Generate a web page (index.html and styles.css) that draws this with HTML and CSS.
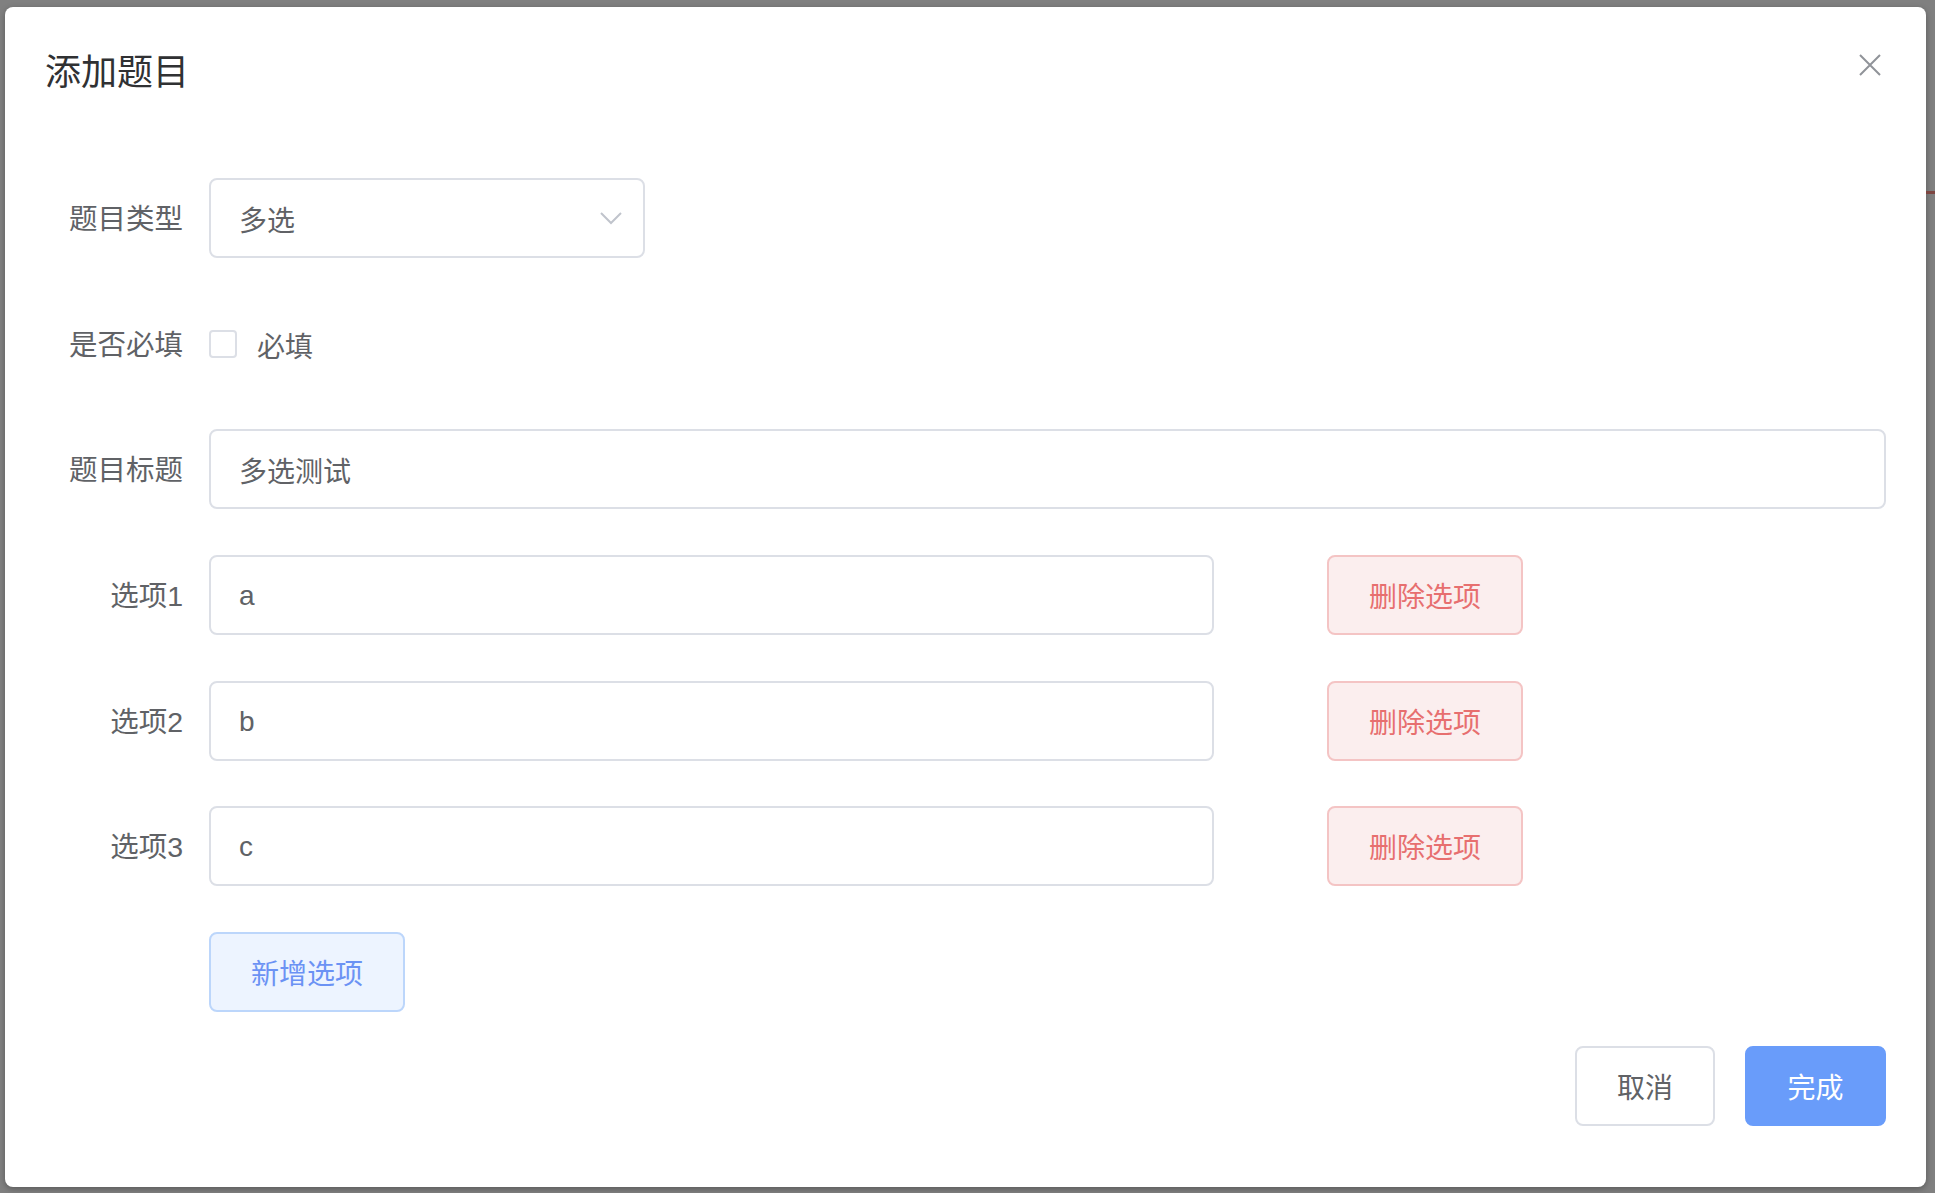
FILE: index.html
```html
<!DOCTYPE html>
<html lang="zh-CN">
<head>
<meta charset="utf-8">
<title>添加题目</title>
<link rel="stylesheet" href="styles.css">
</head>
<body>
<div class="edge-mark"></div>
<div class="dialog">
  <div class="dialog-header">
    <span class="dialog-title">添加题目</span>
    <button class="dialog-close" aria-label="关闭">
      <svg width="32" height="32" viewBox="0 0 32 32"><path d="M6 6 L26 26 M26 6 L6 26" stroke="#909399" stroke-width="2" fill="none"/></svg>
    </button>
  </div>
  <div class="dialog-body">
    <div class="form-item">
      <label class="form-label">题目类型</label>
      <div class="form-content">
        <div class="input select">
          <span class="input-text">多选</span>
          <svg class="select-arrow" width="24" height="14" viewBox="0 0 24 14"><polyline points="2,2 12,12 22,2" stroke="#c0c4cc" stroke-width="2" fill="none"/></svg>
        </div>
      </div>
    </div>
    <div class="form-item">
      <label class="form-label">是否必填</label>
      <div class="form-content">
        <span class="checkbox"></span>
        <span class="checkbox-label">必填</span>
      </div>
    </div>
    <div class="form-item">
      <label class="form-label">题目标题</label>
      <div class="form-content">
        <div class="input full"><span class="input-text">多选测试</span></div>
      </div>
    </div>
    <div class="form-item">
      <label class="form-label">选项1</label>
      <div class="form-content">
        <div class="input option"><span class="input-text">a</span></div>
        <button class="btn btn-danger">删除选项</button>
      </div>
    </div>
    <div class="form-item">
      <label class="form-label">选项2</label>
      <div class="form-content">
        <div class="input option"><span class="input-text">b</span></div>
        <button class="btn btn-danger">删除选项</button>
      </div>
    </div>
    <div class="form-item">
      <label class="form-label">选项3</label>
      <div class="form-content">
        <div class="input option"><span class="input-text">c</span></div>
        <button class="btn btn-danger">删除选项</button>
      </div>
    </div>
    <div class="form-item last">
      <label class="form-label"></label>
      <div class="form-content">
        <button class="btn btn-primary-plain">新增选项</button>
      </div>
    </div>
  </div>
  <div class="dialog-footer">
    <button class="btn btn-default">取消</button>
    <button class="btn btn-primary">完成</button>
  </div>
</div>
</body>
</html>
```
FILE: styles.css
```css
html, body {
  margin: 0;
  padding: 0;
}
body {
  width: 1935px;
  height: 1193px;
  overflow: hidden;
  background: #808080;
  font-family: "Liberation Sans", "Noto Sans CJK SC", sans-serif;
  position: relative;
}
.edge-mark {
  position: absolute;
  left: 1926px;
  top: 191px;
  width: 9px;
  height: 3px;
  background: #7d4641;
}
.dialog {
  margin: 7px 0 0 5px;
  width: 1921px;
  height: 1180px;
  background: #fff;
  border-radius: 8px;
  box-shadow: 0 2px 6px rgba(0, 0, 0, 0.3);
  display: flex;
  flex-direction: column;
  box-sizing: border-box;
}
.dialog-header {
  position: relative;
  padding: 42px 40px 0;
}
.dialog-title {
  display: block;
  font-size: 36px;
  line-height: 48px;
  color: #303133;
}
.dialog-close {
  position: absolute;
  top: 42px;
  right: 40px;
  width: 32px;
  height: 32px;
  padding: 0;
  border: none;
  background: transparent;
  display: flex;
}
.dialog-body {
  padding: 81px 40px 0;
  display: flex;
  flex-direction: column;
  gap: 45.67px;
}
.form-item {
  display: flex;
  height: 80px;
}
.form-label {
  width: 164px;
  flex: 0 0 164px;
  box-sizing: border-box;
  padding: 1px 26px 0 0;
  text-align: right;
  font-size: 28.5px;
  line-height: 80px;
  color: #606266;
}
.form-content {
  flex: 1;
  display: flex;
  align-items: center;
}
.input {
  height: 80px;
  box-sizing: border-box;
  border: 2px solid #dcdfe6;
  border-radius: 8px;
  padding: 2px 30px 0 28px;
  display: flex;
  align-items: center;
  font-size: 28px;
  color: #606266;
  background: #fff;
}
.select {
  width: 436px;
  justify-content: space-between;
  padding-right: 20px;
}
.select-arrow {
  margin-top: -2px;
}
.full {
  flex: 1;
}
.option {
  width: 1005px;
  flex: 0 0 1005px;
}
.checkbox {
  width: 28px;
  height: 28px;
  box-sizing: border-box;
  border: 2px solid #dcdfe6;
  border-radius: 4px;
  background: #fff;
}
.checkbox-label {
  margin-left: 20px;
  padding-top: 2px;
  font-size: 28px;
  color: #606266;
}
.btn {
  height: 80px;
  box-sizing: border-box;
  border: 2px solid #dcdfe6;
  border-radius: 8px;
  padding: 6px 0 0;
  font-family: "Liberation Sans", "Noto Sans CJK SC", sans-serif;
  font-size: 28px;
  line-height: 1;
  background: #fff;
  color: #606266;
  cursor: pointer;
}
.btn-danger {
  margin-left: 113px;
  width: 196px;
  background: #fbeeee;
  border-color: #f4c4c4;
  color: #e76f6f;
}
.btn-primary-plain {
  width: 196px;
  background: #edf4ff;
  border-color: #bcd6fb;
  color: #6b92f4;
}
.dialog-footer {
  margin-top: auto;
  padding: 0 40px 61px;
  display: flex;
  justify-content: flex-end;
  gap: 30px;
}
.btn-default {
  width: 140px;
}
.btn-primary {
  width: 141px;
  background: #699cfa;
  border-color: #699cfa;
  color: #fff;
}
```
